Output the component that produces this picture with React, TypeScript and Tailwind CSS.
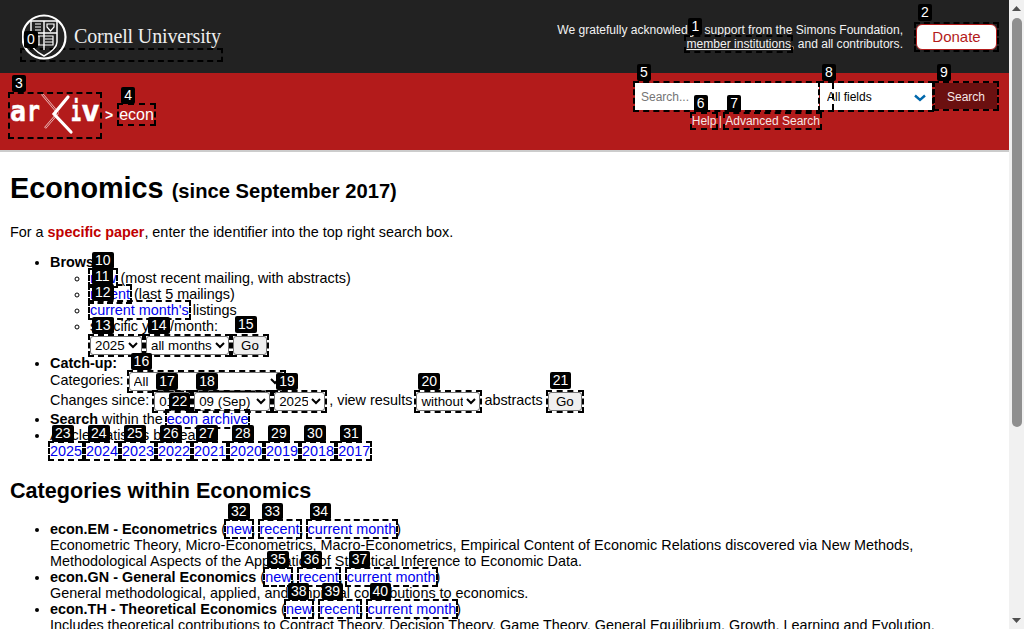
import type { ReactNode } from "react";

const FONT = "[font-family:'Liberation_Sans',Arial,sans-serif]";

const fullYears = ["2025", "2024", "2023", "2022", "2021", "2020", "2019", "2018", "2017"];

const categories = [
  {
    name: "econ.EM - Econometrics",
    ids: [32, 33, 34],
    text: (
      <>
        Econometric Theory, Micro-Econometrics, Macro-Econometrics, Empirical Content of Economic Relations discovered via New Methods,
        <br />
        Methodological Aspects of the Application of Statistical Inference to Economic Data.
      </>
    ),
  },
  {
    name: "econ.GN - General Economics",
    ids: [35, 36, 37],
    text: <>General methodological, applied, and empirical contributions to economics.</>,
  },
  {
    name: "econ.TH - Theoretical Economics",
    ids: [38, 39, 40],
    text: (
      <>
        Includes theoretical contributions to Contract Theory, Decision Theory, Game Theory, General Equilibrium, Growth, Learning and Evolution, Macroeconomics, Market and Mechanism Design, and Social Choice.
      </>
    ),
  },
];

// numbered tag that sits above a dashed box
function Box({ n, children, className = "", badge = "mb-[2px]" }: { n: number; children: ReactNode; className?: string; badge?: string }) {
  return (
    <span className={`relative outline-2 outline-black outline-dashed ${className}`}>
      <span className={`absolute bottom-full left-[2px] z-20 rounded-[2px] bg-black px-[3px] text-center text-[14px] font-normal leading-[17px] text-white ${badge}`}>
        {n}
      </span>
      {children}
    </span>
  );
}

function A({ n, children }: { n: number; children: ReactNode }) {
  return (
    <Box n={n} badge="mb-[1px]">
      <a href="#" className="text-[#0000ee]">
        {children}
      </a>
    </Box>
  );
}

function Sel({ n, options, className = "" }: { n: number; options: string[]; className?: string }) {
  return (
    <Box n={n} className="inline-block align-middle">
      <select
        defaultValue={options[0]}
        className={`block h-[19px] rounded-[3px] border border-[#767676] bg-white text-[13.33px] text-black ${className}`}
      >
        {options.map((o) => (
          <option key={o}>{o}</option>
        ))}
      </select>
    </Box>
  );
}

function GoBtn({ n }: { n: number }) {
  return (
    <Box n={n} badge="mb-[3px]" className="inline-block align-middle">
      <button className="block h-[19px] w-[34px] rounded-[3px] border border-[#767676] bg-[#efefef] text-[13.33px] leading-[15px] text-black">
        Go
      </button>
    </Box>
  );
}

function CornellLogo() {
  return (
    <svg viewBox="0 0 202 50" className="absolute bottom-[-2px] left-0 h-[50px] w-[202px]">
      <circle cx="22" cy="25" r="21.5" fill="none" stroke="#fff" strokeWidth="2.2" />
      <path d="M9 9H35V30Q35 37 22 44Q9 37 9 30Z" fill="none" stroke="#fff" strokeWidth="1.5" />
      <path d="M22 9V38M9 21H35" stroke="#fff" strokeWidth="1.4" />
      <path d="M13 12H19M13 15H19M13 18H19M25 12H32V15L28.5 19L25 15Z" fill="none" stroke="#fff" strokeWidth="1.2" />
      <path d="M13 24H31V33H13ZM17 24V33M23 27H31M23 30H31" fill="none" stroke="#fff" strokeWidth="1.2" />
      <text x="52" y="31" fontFamily="'Liberation Serif',serif" fontSize="20" fill="#eee" textLength="147">
        Cornell University
      </text>
    </svg>
  );
}

function ArxivLogo() {
  const letter = { fontFamily: "'DejaVu Sans Mono',monospace", fontWeight: 700, fontSize: 29, fill: "#fff", stroke: "#fff", strokeWidth: 0.5 };
  return (
    <svg viewBox="0 0 90 43" className="block h-[43px] w-[90px]">
      <text x="0" y="27" {...letter} textLength="16" lengthAdjust="spacingAndGlyphs">
        a
      </text>
      <text x="17" y="27" {...letter} textLength="13" lengthAdjust="spacingAndGlyphs">
        r
      </text>
      <text x="61" y="27" {...letter} textLength="10" lengthAdjust="spacingAndGlyphs">
        i
      </text>
      <text x="71" y="27" {...letter} textLength="19" lengthAdjust="spacingAndGlyphs">
        v
      </text>
      <path d="M32 0L48 19M35 34L48 19" fill="none" stroke="#e8b0b0" strokeWidth="2.5" />
      <path d="M32.5 0.5L48 19M35.5 33.5L48 19" fill="none" stroke="#b31b1b" strokeWidth="1" />
      <path d="M58 3L44 20L61 38" fill="none" stroke="#fff" strokeWidth="3.2" strokeLinecap="round" />
    </svg>
  );
}

function Scrollbar() {
  return (
    <div className="flex h-full w-[15px] flex-col items-center bg-[#f1f1f1]">
      <svg viewBox="0 0 15 17" className="h-[17px] w-[15px] shrink-0">
        <path d="M3 11L7.5 6L12 11Z" fill="#505050" />
      </svg>
      <div className="mt-[1px] h-[409px] w-[10px] shrink-0 rounded-[5px] bg-[#8f8f8f]" />
      <div className="flex-1" />
      <svg viewBox="0 0 15 17" className="h-[17px] w-[15px] shrink-0">
        <path d="M3 6L7.5 11L12 6Z" fill="#505050" />
      </svg>
    </div>
  );
}

export default function App() {
  return (
    <div className={`flex h-[629px] w-full overflow-hidden bg-white text-[14.4px] leading-[16px] text-black ${FONT}`}>
      <div className="min-w-0 flex-1">
        {/* Top identity bar */}
        <div className="flex h-[73px] justify-between bg-[#222222] pr-[12px] text-[12.07px] leading-[14px] text-white">
          <div className="pl-[22px] pt-[50px]">
            <Box n={0} className="block h-[10px] w-[199px]">
              <CornellLogo />
            </Box>
          </div>
          <div className="flex items-start gap-[13px] pt-[23px]">
            <p className="text-right text-[#f2f2f2]">
              We gratefully acknowledge support from the Simons Foundation,
              <br />
              <Box n={1} badge="mb-[2px]">
                <a href="#" className="underline">
                  member institutions
                </a>
              </Box>
              , and all contributors.
            </p>
            <Box n={2} badge="mb-[3px]" className="mt-[1px] block">
              <a href="#" className="block h-[26px] w-[81px] rounded-[6px] border border-[#b31b1b] bg-white text-center text-[15px] leading-[23px] text-[#b31b1b]">
                Donate
              </a>
            </Box>
          </div>
        </div>

        {/* Red search bar */}
        <div className="flex h-[79px] justify-between border-b-2 border-[#cccccc] bg-[#b31b1b] pr-[12px]">
          <div className="flex items-start pl-[10px] pt-[21px]">
            <Box n={3} className="block">
              <ArxivLogo />
            </Box>
            <span className="ml-[5px] mt-[12px] text-[14px] font-bold leading-[18px] text-white">&gt;</span>
            <span className="ml-[6px] mt-[11px]">
              <Box n={4} badge="mb-[1px]" className="block">
                <a href="#" className="block text-[16px] leading-[19px] text-white">
                  econ
                </a>
              </Box>
            </span>
          </div>
          <div className="flex items-start pt-[10px]">
            <div className="flex w-[185px] flex-col items-end">
              <Box n={5} className="block w-full">
                <input placeholder="Search..." className="block h-[27px] w-[184px] bg-white pl-[6px] text-[12px] placeholder:text-[#757575]" />
              </Box>
              <div className="mt-[4px] text-[12px] leading-[14px] text-[#f5e6e6]">
                <Box n={6}>
                  <a href="#">Help</a>
                </Box>
                <span className="-ml-[1px]"> | </span>
                <Box n={7}>
                  <a href="#">Advanced Search</a>
                </Box>
              </div>
            </div>
            <Box n={8} className="block">
              <select defaultValue="All fields" className="block h-[27px] w-[112px] appearance-none bg-white pl-[7px] text-[12px] text-black">
                <option>All fields</option>
              </select>
              <svg viewBox="0 0 12 8" className="pointer-events-none absolute right-[6px] top-[11px] h-[8px] w-[12px]">
                <path d="M1 1.5L6 6L11 1.5" fill="none" stroke="#0068ac" strokeWidth="2.4" />
              </svg>
              <span className="absolute bottom-0 left-[12px] top-0 border-l-2 border-dashed border-black" />
            </Box>
            <Box n={9} className="ml-[3px] block">
              <button className="block h-[26px] w-[62px] bg-[#6b1010] pt-[2px] text-[12px] text-[#f5e6e6]">Search</button>
            </Box>
          </div>
        </div>

        {/* Main content */}
        <main className="px-[10px]">
          <h1 className="mt-[20px] text-[28.8px] font-bold leading-[33px]">
            Economics <span className="text-[20.16px]">(since September 2017)</span>
          </h1>
          <p className="mt-[16px]">
            For a <span className="font-bold text-[#c00000]">specific paper</span>, enter the identifier into the top right search box.
          </p>

          <ul className="mt-[14px] list-disc pl-[40px]">
            <li>
              <b>Browse:</b>
              <ul className="list-[circle] pl-[40px]">
                <li>
                  <A n={10}>new</A> (most recent mailing, with abstracts)
                </li>
                <li>
                  <A n={11}>recent</A> (last 5 mailings)
                </li>
                <li>
                  <A n={12}>current month's</A> listings
                </li>
                <li>
                  specific year/month:
                  <div className="mt-[2px] flex items-center gap-[4px]">
                    <Sel n={13} options={["2025"]} className="w-[52px]" />
                    <Sel n={14} options={["all months"]} className="w-[83px]" />
                    <GoBtn n={15} />
                  </div>
                </li>
              </ul>
            </li>
            <li>
              <b>Catch-up:</b>
              <div className="mt-[1px] flex items-center">
                <span className="mb-[3px]">Categories:</span>
                <span className="ml-[5px]">
                  <Sel n={16} options={["All"]} className="w-[155px]" />
                </span>
              </div>
              <div className="mt-[1px] flex items-center">
                <span className="mb-[3px]">Changes since:</span>
                <span className="ml-[5px] flex items-center gap-[4px]">
                  <Sel n={17} options={["01"]} className="w-[36px]" />
                  <Sel n={18} options={["09 (Sep)"]} className="w-[76px]" />
                  <Sel n={19} options={["2025"]} className="w-[51px]" />
                </span>
                <span className="mb-[3px] ml-[4px]">, view results</span>
                <span className="ml-[4px]">
                  <Sel n={20} options={["without"]} className="w-[64px]" />
                </span>
                <span className="mb-[3px] ml-[4px]">abstracts</span>
                <span className="ml-[5px]">
                  <GoBtn n={21} />
                </span>
              </div>
            </li>
            <li>
              <b>Search</b> within the <A n={22}>econ archive</A>
            </li>
            <li>
              Article statistics by year:
              <br />
              <span className="flex gap-[4px]">
                {fullYears.map((y, i) => (
                  <A key={y} n={23 + i}>
                    {y}
                  </A>
                ))}
              </span>
            </li>
          </ul>

          <h2 className="mt-[19px] text-[21.6px] font-bold leading-[25px]">Categories within Economics</h2>

          <ul className="mt-[18px] list-disc pl-[40px]">
            {categories.map((c) => (
              <li key={c.name}>
                <b>{c.name}</b> (<A n={c.ids[0]}>new</A>, <A n={c.ids[1]}>recent</A>, <A n={c.ids[2]}>current month</A>)
                <br />
                {c.text}
              </li>
            ))}
          </ul>
        </main>
      </div>
      <Scrollbar />
    </div>
  );
}
